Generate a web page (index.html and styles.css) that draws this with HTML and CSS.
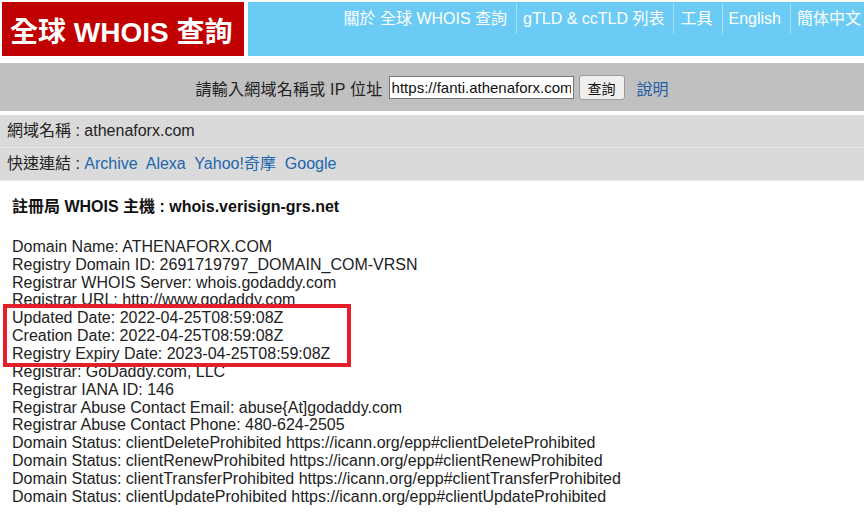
FILE: index.html
```html
<!DOCTYPE html>
<html lang="zh-Hant">
<head>
<meta charset="utf-8">
<title>全球 WHOIS 查詢</title>
<link rel="stylesheet" href="styles.css">
</head>
<body>
<div class="page">
  <header class="header">
    <div class="brand">全球 WHOIS 查詢</div>
    <nav class="nav">
      <a class="nav-item" href="#">關於 全球 WHOIS 查詢</a>
      <a class="nav-item" href="#">gTLD &amp; ccTLD 列表</a>
      <a class="nav-item" href="#">工具</a>
      <a class="nav-item" href="#">English</a>
      <a class="nav-item last" href="#">簡体中文</a>
    </nav>
  </header>

  <form class="search">
    <label class="search-label" for="q">請輸入網域名稱或 IP 位址</label>
    <input class="search-input" id="q" type="text" value="https://fanti.athenaforx.com/">
    <button class="search-btn" type="button">查詢</button>
    <a class="help" href="#">說明</a>
  </form>

  <div class="bar">網域名稱 : athenaforx.com</div>
  <div class="bar">快速連結 : <a href="#">Archive</a>&nbsp; <a href="#">Alexa</a>&nbsp; <a href="#">Yahoo!奇摩</a>&nbsp; <a href="#">Google</a></div>

  <main class="content">
    <div class="server">註冊局 WHOIS 主機 : whois.verisign-grs.net</div>
    <div class="record">
      <div>Domain Name: ATHENAFORX.COM</div>
      <div>Registry Domain ID: 2691719797_DOMAIN_COM-VRSN</div>
      <div>Registrar WHOIS Server: whois.godaddy.com</div>
      <div>Registrar URL: http://www.godaddy.com</div>
      <div class="highlight">
        <div>Updated Date: 2022-04-25T08:59:08Z</div>
        <div>Creation Date: 2022-04-25T08:59:08Z</div>
        <div>Registry Expiry Date: 2023-04-25T08:59:08Z</div>
      </div>
      <div>Registrar: GoDaddy.com, LLC</div>
      <div>Registrar IANA ID: 146</div>
      <div>Registrar Abuse Contact Email: abuse{At]godaddy.com</div>
      <div>Registrar Abuse Contact Phone: 480-624-2505</div>
      <div>Domain Status: clientDeleteProhibited https://icann.org/epp#clientDeleteProhibited</div>
      <div>Domain Status: clientRenewProhibited https://icann.org/epp#clientRenewProhibited</div>
      <div>Domain Status: clientTransferProhibited https://icann.org/epp#clientTransferProhibited</div>
      <div>Domain Status: clientUpdateProhibited https://icann.org/epp#clientUpdateProhibited</div>
    </div>
  </main>
</div>
</body>
</html>
```

FILE: styles.css
```css
* { box-sizing: border-box; }

html, body {
  margin: 0;
  padding: 0;
  background: #ffffff;
}

body {
  font-family: "Liberation Sans", Arial, "Noto Sans CJK TC", sans-serif;
  font-size: 16px;
  color: #222222;
  overflow: hidden;
}

.page {
  width: 864px;
}

/* Header */
.header {
  display: flex;
  gap: 4px;
  height: 54px;
  margin-top: 2px;
  padding-left: 2px;
}

.brand {
  width: 242px;
  background: #c00000;
  color: #ffffff;
  font-weight: bold;
  font-size: 28px;
  display: flex;
  align-items: center;
  padding-left: 8px;
  padding-top: 1px;
  white-space: nowrap;
}

.nav {
  flex: 1;
  background: #6bcbf4;
  display: flex;
  justify-content: flex-end;
  align-items: flex-start;
}

.nav-item {
  display: block;
  margin-top: 1px;
  height: 31px;
  line-height: 31px;
  padding: 0 9px 0 6px;
  color: #ffffff;
  text-decoration: none;
  border-left: 1px solid #a9e0f7;
  white-space: nowrap;
}

.nav-item:first-child { border-left: none; }
.nav-item.last { padding-right: 3px; }

/* Search bar */
.search {
  margin: 7px 0 0 0;
  height: 48px;
  background: #c0c0c0;
  display: flex;
  align-items: center;
  justify-content: center;
  padding-top: 1px;
}

.search-label {
  color: #222222;
  letter-spacing: 0.25px;
  margin-right: 6px;
}

.search-input {
  width: 185px;
  height: 23px;
  border: 1px solid #767676;
  font-family: "Liberation Sans", Arial, sans-serif;
  font-size: 15px;
  padding: 0 2px;
  color: #111111;
  background: #ffffff;
  border-radius: 0;
}

.search-btn {
  margin-left: 5px;
  width: 46px;
  height: 25px;
  border: 1px solid #9a9a9a;
  border-radius: 3px;
  background: #efefef;
  font-family: "Liberation Sans", Arial, "Noto Sans CJK TC", sans-serif;
  font-size: 14px;
  color: #111111;
  padding: 0;
}

.help {
  margin-left: 12px;
  color: #1f5fa6;
  text-decoration: none;
}

/* Info bars */
.bar {
  height: 33px;
  background: #dadada;
  border-bottom: 1px solid #ebebeb;
  padding-left: 7px;
  line-height: 32px;
  color: #222222;
}

.search + .bar { margin-top: 4px; }

.bar a {
  color: #2166ae;
  text-decoration: none;
}

/* Content */
.content {
  padding: 17px 0 0 12px;
  line-height: 17.86px;
}

.server {
  font-weight: bold;
  color: #111111;
}

.record {
  margin-top: 22px;
  color: #222222;
  white-space: nowrap;
}

.highlight {
  position: relative;
}

.highlight::after {
  content: "";
  position: absolute;
  left: -9px;
  top: -5px;
  width: 340px;
  bottom: -4px;
  border: 4px solid #e3202a;
  pointer-events: none;
}
```
